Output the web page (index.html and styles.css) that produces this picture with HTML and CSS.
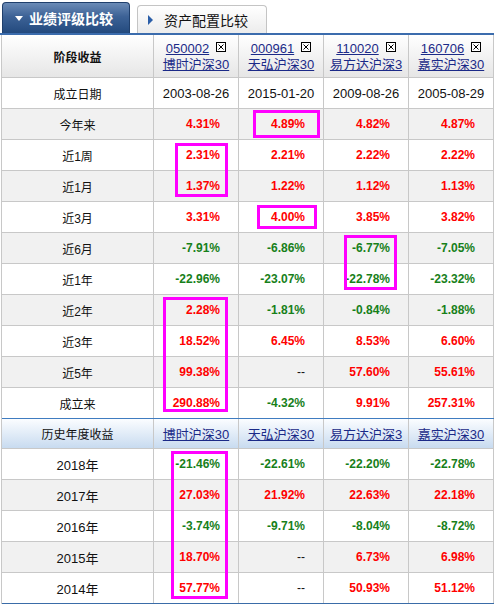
FILE: index.html
```html
<!DOCTYPE html>
<html lang="zh">
<head>
<meta charset="utf-8">
<link rel="stylesheet" href="styles.css">
</head>
<body>
<div class="page">
  <div class="tabs">
    <div class="tab active"><span class="tri-down"></span>业绩评级比较</div>
    <div class="tab"><span class="tri-right"></span>资产配置比较</div>
  </div>
  <div class="grid">
    <div class="row head">
      <div class="cell lbl bold">阶段收益</div>
      <div class="cell fund"><div><a>050002</a><span class="x"><svg width="10" height="10" viewBox="0 0 10 10"><rect x="0.5" y="0.5" width="9" height="9" fill="#fff" stroke="#000"/><path d="M2.5 2.5 L7.5 7.5 M7.5 2.5 L2.5 7.5" stroke="#000" stroke-width="1"/></svg></span></div><div><a>博时沪深30</a></div></div>
      <div class="cell fund"><div><a>000961</a><span class="x"><svg width="10" height="10" viewBox="0 0 10 10"><rect x="0.5" y="0.5" width="9" height="9" fill="#fff" stroke="#000"/><path d="M2.5 2.5 L7.5 7.5 M7.5 2.5 L2.5 7.5" stroke="#000" stroke-width="1"/></svg></span></div><div><a>天弘沪深30</a></div></div>
      <div class="cell fund"><div><a>110020</a><span class="x"><svg width="10" height="10" viewBox="0 0 10 10"><rect x="0.5" y="0.5" width="9" height="9" fill="#fff" stroke="#000"/><path d="M2.5 2.5 L7.5 7.5 M7.5 2.5 L2.5 7.5" stroke="#000" stroke-width="1"/></svg></span></div><div><a>易方达沪深3</a></div></div>
      <div class="cell fund"><div><a>160706</a><span class="x"><svg width="10" height="10" viewBox="0 0 10 10"><rect x="0.5" y="0.5" width="9" height="9" fill="#fff" stroke="#000"/><path d="M2.5 2.5 L7.5 7.5 M7.5 2.5 L2.5 7.5" stroke="#000" stroke-width="1"/></svg></span></div><div><a>嘉实沪深30</a></div></div>
    </div>
    <div class="row">
      <div class="cell lbl">成立日期</div>
      <div class="cell date">2003-08-26</div><div class="cell date">2015-01-20</div><div class="cell date">2009-08-26</div><div class="cell date">2005-08-29</div>
    </div>
    <div class="row alt">
      <div class="cell lbl">今年来</div>
      <div class="cell up">4.31%</div><div class="cell up">4.89%</div><div class="cell up">4.82%</div><div class="cell up">4.87%</div>
    </div>
    <div class="row">
      <div class="cell lbl">近1周</div>
      <div class="cell up">2.31%</div><div class="cell up">2.21%</div><div class="cell up">2.22%</div><div class="cell up">2.22%</div>
    </div>
    <div class="row alt">
      <div class="cell lbl">近1月</div>
      <div class="cell up">1.37%</div><div class="cell up">1.22%</div><div class="cell up">1.12%</div><div class="cell up">1.13%</div>
    </div>
    <div class="row">
      <div class="cell lbl">近3月</div>
      <div class="cell up">3.31%</div><div class="cell up">4.00%</div><div class="cell up">3.85%</div><div class="cell up">3.82%</div>
    </div>
    <div class="row alt">
      <div class="cell lbl">近6月</div>
      <div class="cell down">-7.91%</div><div class="cell down">-6.86%</div><div class="cell down">-6.77%</div><div class="cell down">-7.05%</div>
    </div>
    <div class="row">
      <div class="cell lbl">近1年</div>
      <div class="cell down">-22.96%</div><div class="cell down">-23.07%</div><div class="cell down">-22.78%</div><div class="cell down">-23.32%</div>
    </div>
    <div class="row alt">
      <div class="cell lbl">近2年</div>
      <div class="cell up">2.28%</div><div class="cell down">-1.81%</div><div class="cell down">-0.84%</div><div class="cell down">-1.88%</div>
    </div>
    <div class="row">
      <div class="cell lbl">近3年</div>
      <div class="cell up">18.52%</div><div class="cell up">6.45%</div><div class="cell up">8.53%</div><div class="cell up">6.60%</div>
    </div>
    <div class="row alt">
      <div class="cell lbl">近5年</div>
      <div class="cell up">99.38%</div><div class="cell none">--</div><div class="cell up">57.60%</div><div class="cell up">55.61%</div>
    </div>
    <div class="row before-sec">
      <div class="cell lbl">成立来</div>
      <div class="cell up">290.88%</div><div class="cell down">-4.32%</div><div class="cell up">9.91%</div><div class="cell up">257.31%</div>
    </div>
    <div class="row sec">
      <div class="cell lbl">历史年度收益</div>
      <div class="cell name"><a>博时沪深30</a></div><div class="cell name"><a>天弘沪深30</a></div><div class="cell name"><a>易方达沪深3</a></div><div class="cell name"><a>嘉实沪深30</a></div>
    </div>
    <div class="row">
      <div class="cell lbl yr">2018年</div>
      <div class="cell down">-21.46%</div><div class="cell down">-22.61%</div><div class="cell down">-22.20%</div><div class="cell down">-22.78%</div>
    </div>
    <div class="row alt">
      <div class="cell lbl yr">2017年</div>
      <div class="cell up">27.03%</div><div class="cell up">21.92%</div><div class="cell up">22.63%</div><div class="cell up">22.18%</div>
    </div>
    <div class="row">
      <div class="cell lbl yr">2016年</div>
      <div class="cell down">-3.74%</div><div class="cell down">-9.71%</div><div class="cell down">-8.04%</div><div class="cell down">-8.72%</div>
    </div>
    <div class="row alt">
      <div class="cell lbl yr">2015年</div>
      <div class="cell up">18.70%</div><div class="cell none">--</div><div class="cell up">6.73%</div><div class="cell up">6.98%</div>
    </div>
    <div class="row last">
      <div class="cell lbl yr">2014年</div>
      <div class="cell up">57.77%</div><div class="cell none">--</div><div class="cell up">50.93%</div><div class="cell up">51.12%</div>
    </div>
  </div>
  <div class="mark m1"></div>
  <div class="mark m2"></div>
  <div class="mark m3"></div>
  <div class="mark m4"></div>
  <div class="mark m5"></div>
  <div class="mark m6"></div>
</div>
</body>
</html>
```
FILE: styles.css
```css
* { box-sizing: border-box; }
html, body { margin: 0; padding: 0; background: #fff; }
body {
  font-family: "Liberation Sans", "Noto Sans CJK SC", sans-serif;
  font-size: 13px;
  color: #111;
}
.page { position: relative; width: 495px; height: 605px; overflow: hidden; }

.tabs {
  height: 35px;
  width: 494px;
  border-bottom: 2px solid #3b6cad;
  display: flex;
  align-items: flex-end;
  padding-left: 2px;
  gap: 7px;
}
.tab {
  display: flex;
  align-items: center;
  font-size: 14px;
  border-radius: 4px 4px 0 0;
}
.tab.active {
  width: 128px;
  height: 31px;
  padding-left: 12px;
  color: #fff;
  font-weight: bold;
  background: linear-gradient(#6b8bb6, #3d6296 45%, #234a7e);
  border: 1px solid #1f3f6c;
  border-bottom: none;
}
.tab:not(.active) {
  width: 130px;
  height: 28px;
  padding-left: 10px;
  color: #111;
  background: linear-gradient(#ffffff, #ececec);
  border: 1px solid #c4c4c4;
  border-bottom: none;
}
.tri-down {
  width: 0; height: 0;
  border-left: 4px solid transparent;
  border-right: 4px solid transparent;
  border-top: 5px solid #fff;
  margin-right: 6px;
}
.tri-right {
  width: 0; height: 0;
  border-top: 5px solid transparent;
  border-bottom: 5px solid transparent;
  border-left: 5px solid #2b5ea8;
  margin-right: 11px;
}

.grid {
  margin-left: 1px;
  width: 493px;
  border-left: 1px solid #c8c8c8;
}
.row {
  display: grid;
  grid-template-columns: 152px 85px 85px 85px 85px;
  height: 31px;
  border-bottom: 1px solid #c8c8c8;
  background: #fff;
}
.row.alt { background: #f1f1f1; }
.row.head {
  height: 43px;
  background: linear-gradient(#ffffff, #e6e6e6);
}
.row.before-sec { border-bottom-color: #3f7cc0; }
.row.sec {
  height: 30px;
  background: linear-gradient(#fbfdff, #c8dbf0);
}
.row.last { border-bottom: 1px solid #3a6ca8; }

.cell {
  border-right: 1px solid #c8c8c8;
  display: flex;
  align-items: center;
  justify-content: center;
  white-space: nowrap;
}
.lbl { font-size: 12px; color: #111; }
.lbl.yr { font-size: 13px; }
.bold { font-weight: bold; }
.date { font-size: 13px; color: #111; }
.up, .down, .none {
  justify-content: flex-end;
  padding-right: 18px;
  font-weight: bold;
  font-size: 12px;
}
.up { color: #ff0000; }
.down { color: #17801a; }
.none { color: #111; font-weight: normal; }

a { color: #1b2a88; text-decoration: underline; }
.fund {
  flex-direction: column;
  justify-content: center;
  line-height: 16px;
  font-size: 13px;
  padding-top: 1px;
}
.fund > div { display: flex; align-items: center; }
.x { display: inline-flex; margin-left: 7px; margin-top: -4px; }
.name { font-size: 13px; }
.sec .lbl { font-size: 12px; }

.mark {
  position: absolute;
  border: 3px solid #ff00ff;
}
.m1 { left: 253px; top: 110px; width: 67px; height: 28px; }
.m2 { left: 175px; top: 143px; width: 53px; height: 54px; }
.m3 { left: 257px; top: 205px; width: 60px; height: 24px; }
.m4 { left: 344px; top: 235px; width: 53px; height: 55px; }
.m5 { left: 163px; top: 297px; width: 65px; height: 115px; }
.m6 { left: 171px; top: 451px; width: 57px; height: 148px; }
```
